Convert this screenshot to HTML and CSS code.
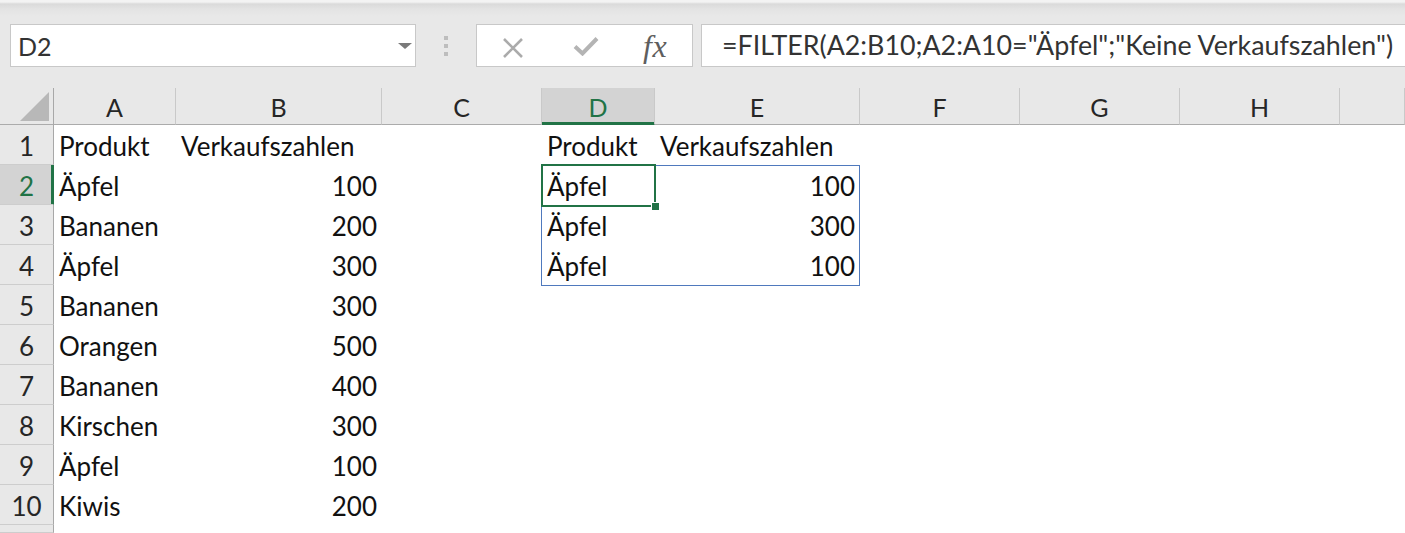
FILE: index.html
```html
<!DOCTYPE html>
<html lang="de">
<head>
<meta charset="utf-8">
<title>Excel FILTER</title>
<link rel="stylesheet" href="styles.css">
</head>
<body>
<div class="toolbar">
  <div class="namebox"><span class="name">D2</span><span class="drop"></span></div>
  <div class="grip"><i></i><i></i><i></i></div>
  <div class="fxbox">
    <svg class="ic-x" width="22" height="20" viewBox="0 0 22 20"><path d="M2 1 L20 19 M20 1 L2 19" stroke="#ababab" stroke-width="2.6" fill="none"/></svg>
    <svg class="ic-check" width="26" height="20" viewBox="0 0 26 20"><path d="M2 10.5 L9.5 17.5 L24 2.5" stroke="#b4b4b4" stroke-width="4" fill="none"/></svg>
    <span class="fx">fx</span>
  </div>
  <div class="formula">=FILTER(A2:B10;A2:A10="Äpfel";"Keine Verkaufszahlen")</div>
</div>

<div class="sheet">
  <div class="cells">
    <div class="corner"><span class="tri"></span></div>
    <div class="ch">A</div><div class="ch">B</div><div class="ch">C</div><div class="ch ch-sel">D</div><div class="ch">E</div><div class="ch">F</div><div class="ch">G</div><div class="ch">H</div><div class="ch"></div>

    <div class="rh">1</div><div class="c">Produkt</div><div class="c">Verkaufszahlen</div><div class="c"></div><div class="c">Produkt</div><div class="c">Verkaufszahlen</div><div class="c"></div><div class="c"></div><div class="c"></div><div class="c"></div>
    <div class="rh rh-sel">2</div><div class="c">Äpfel</div><div class="c n">100</div><div class="c"></div><div class="c">Äpfel</div><div class="c n">100</div><div class="c"></div><div class="c"></div><div class="c"></div><div class="c"></div>
    <div class="rh">3</div><div class="c">Bananen</div><div class="c n">200</div><div class="c"></div><div class="c">Äpfel</div><div class="c n">300</div><div class="c"></div><div class="c"></div><div class="c"></div><div class="c"></div>
    <div class="rh">4</div><div class="c">Äpfel</div><div class="c n">300</div><div class="c"></div><div class="c">Äpfel</div><div class="c n">100</div><div class="c"></div><div class="c"></div><div class="c"></div><div class="c"></div>
    <div class="rh">5</div><div class="c">Bananen</div><div class="c n">300</div><div class="c"></div><div class="c"></div><div class="c"></div><div class="c"></div><div class="c"></div><div class="c"></div><div class="c"></div>
    <div class="rh">6</div><div class="c">Orangen</div><div class="c n">500</div><div class="c"></div><div class="c"></div><div class="c"></div><div class="c"></div><div class="c"></div><div class="c"></div><div class="c"></div>
    <div class="rh">7</div><div class="c">Bananen</div><div class="c n">400</div><div class="c"></div><div class="c"></div><div class="c"></div><div class="c"></div><div class="c"></div><div class="c"></div><div class="c"></div>
    <div class="rh">8</div><div class="c">Kirschen</div><div class="c n">300</div><div class="c"></div><div class="c"></div><div class="c"></div><div class="c"></div><div class="c"></div><div class="c"></div><div class="c"></div>
    <div class="rh">9</div><div class="c">Äpfel</div><div class="c n">100</div><div class="c"></div><div class="c"></div><div class="c"></div><div class="c"></div><div class="c"></div><div class="c"></div><div class="c"></div>
    <div class="rh">10</div><div class="c">Kiwis</div><div class="c n">200</div><div class="c"></div><div class="c"></div><div class="c"></div><div class="c"></div><div class="c"></div><div class="c"></div><div class="c"></div>
    <div class="rh"></div><div class="c"></div><div class="c"></div><div class="c"></div><div class="c"></div><div class="c"></div><div class="c"></div><div class="c"></div><div class="c"></div><div class="c"></div>
  </div>
  <div class="overlay">
    <div class="spill"></div>
    <div class="selection"><span class="handle"></span></div>
  </div>
</div>
</body>
</html>
```
FILE: styles.css
```css
* { box-sizing: border-box; }
html, body {
  margin: 0;
  padding: 0;
  width: 1405px;
  height: 533px;
  overflow: hidden;
  background: #ffffff;
  font-family: Lato, "Open Sans", sans-serif;
}

.toolbar {
  height: 88px;
  display: flex;
  align-items: flex-start;
  padding: 24px 0 0 10px;
  background: linear-gradient(#f3f3f3 0px, #f3f3f3 2px, #dadada 4px, #e3e3e3 9px, #e8e8e8 16px, #e8e8e8 100%);
}

.namebox {
  width: 406px;
  height: 43px;
  background: #fff;
  border: 1px solid #c8c8c8;
  display: flex;
  align-items: center;
  justify-content: space-between;
  padding: 0 3px 0 7px;
}
.name {
  font-size: 25px;
  color: #333;
  line-height: 40px;
  padding-top: 1px;
}
.drop {
  width: 0;
  height: 0;
  border-left: 7px solid transparent;
  border-right: 7px solid transparent;
  border-top: 6px solid #7a7a7a;
}

.grip {
  width: 60px;
  height: 43px;
  padding: 12px 0 0 28px;
  display: flex;
  flex-direction: column;
  gap: 4px;
}
.grip i {
  display: block;
  width: 4px;
  height: 4px;
  background: #bdbdbd;
}

.fxbox {
  width: 217px;
  height: 43px;
  background: #fff;
  border: 1px solid #c8c8c8;
  display: flex;
  align-items: center;
  padding-left: 25px;
  margin-right: 8px;
}
.ic-x { margin-top: 4px; }
.ic-check { margin-left: 49px; margin-top: 1px; }
.fx {
  margin-left: 44px;
  font-family: "Liberation Serif", "DejaVu Serif", serif;
  font-style: italic;
  font-size: 32px;
  color: #5e5e5e;
  line-height: 40px;
  letter-spacing: 0.5px;
}

.formula {
  flex: 1;
  height: 43px;
  background: #fff;
  border: 1px solid #c8c8c8;
  border-right: none;
  padding: 0 0 0 20px;
  font-size: 26.8px;
  line-height: 40px;
  color: #333;
  white-space: nowrap;
  overflow: hidden;
}

.sheet {
  display: grid;
}
.cells, .overlay {
  grid-area: 1 / 1;
  display: grid;
  grid-template-columns: 54px 122px 206px 160px 113px 205px 160px 160px 160px 65px;
  grid-template-rows: 37px repeat(10, 40px) 8px;
}
.overlay {
  pointer-events: none;
  z-index: 1;
}

.corner {
  background: #e8e8e8;
  border-right: 1px solid #a8a8a8;
  border-bottom: 1px solid #ababab;
  position: relative;
}
.tri {
  position: absolute;
  right: 4px;
  bottom: 3px;
  width: 0;
  height: 0;
  border-left: 29px solid transparent;
  border-bottom: 29px solid #b8b8b8;
}

.ch {
  background: #e8e8e8;
  border-right: 1px solid #c9c9c9;
  border-bottom: 1px solid #ababab;
  text-align: center;
  font-size: 25px;
  line-height: 33px;
  padding-top: 3px;
  color: #262626;
}
.ch-sel {
  background: #d3d3d3;
  color: #217346;
  border-bottom-color: #217346;
  box-shadow: inset 0 -2px 0 #217346;
}

.rh {
  background: #e8e8e8;
  border-right: 1px solid #a8a8a8;
  border-bottom: 1px solid #cdcdcd;
  text-align: center;
  font-size: 26px;
  line-height: 38px;
  padding-top: 2px;
  color: #262626;
}
.rh-sel {
  background: #d3d3d3;
  color: #217346;
  border-right-color: #217346;
  box-shadow: inset -2px 0 0 #217346;
}

.c {
  background: #fff;
  font-size: 26px;
  line-height: 38px;
  padding: 2px 5px 0 5px;
  color: #111;
  white-space: nowrap;
}
.n { text-align: right; }

.spill {
  grid-column: 5 / 7;
  grid-row: 3 / 6;
  border: 1px solid #4f79bd;
  margin: 0 0 -1px -1px;
}
.selection {
  grid-column: 5 / 6;
  grid-row: 3 / 4;
  border: 2px solid #217346;
  margin: -1px -1px -2px -1px;
  position: relative;
}
.handle {
  position: absolute;
  right: -5px;
  bottom: -5px;
  width: 8px;
  height: 8px;
  background: #217346;
  border-left: 1px solid #fff;
  border-top: 1px solid #fff;
}
```
